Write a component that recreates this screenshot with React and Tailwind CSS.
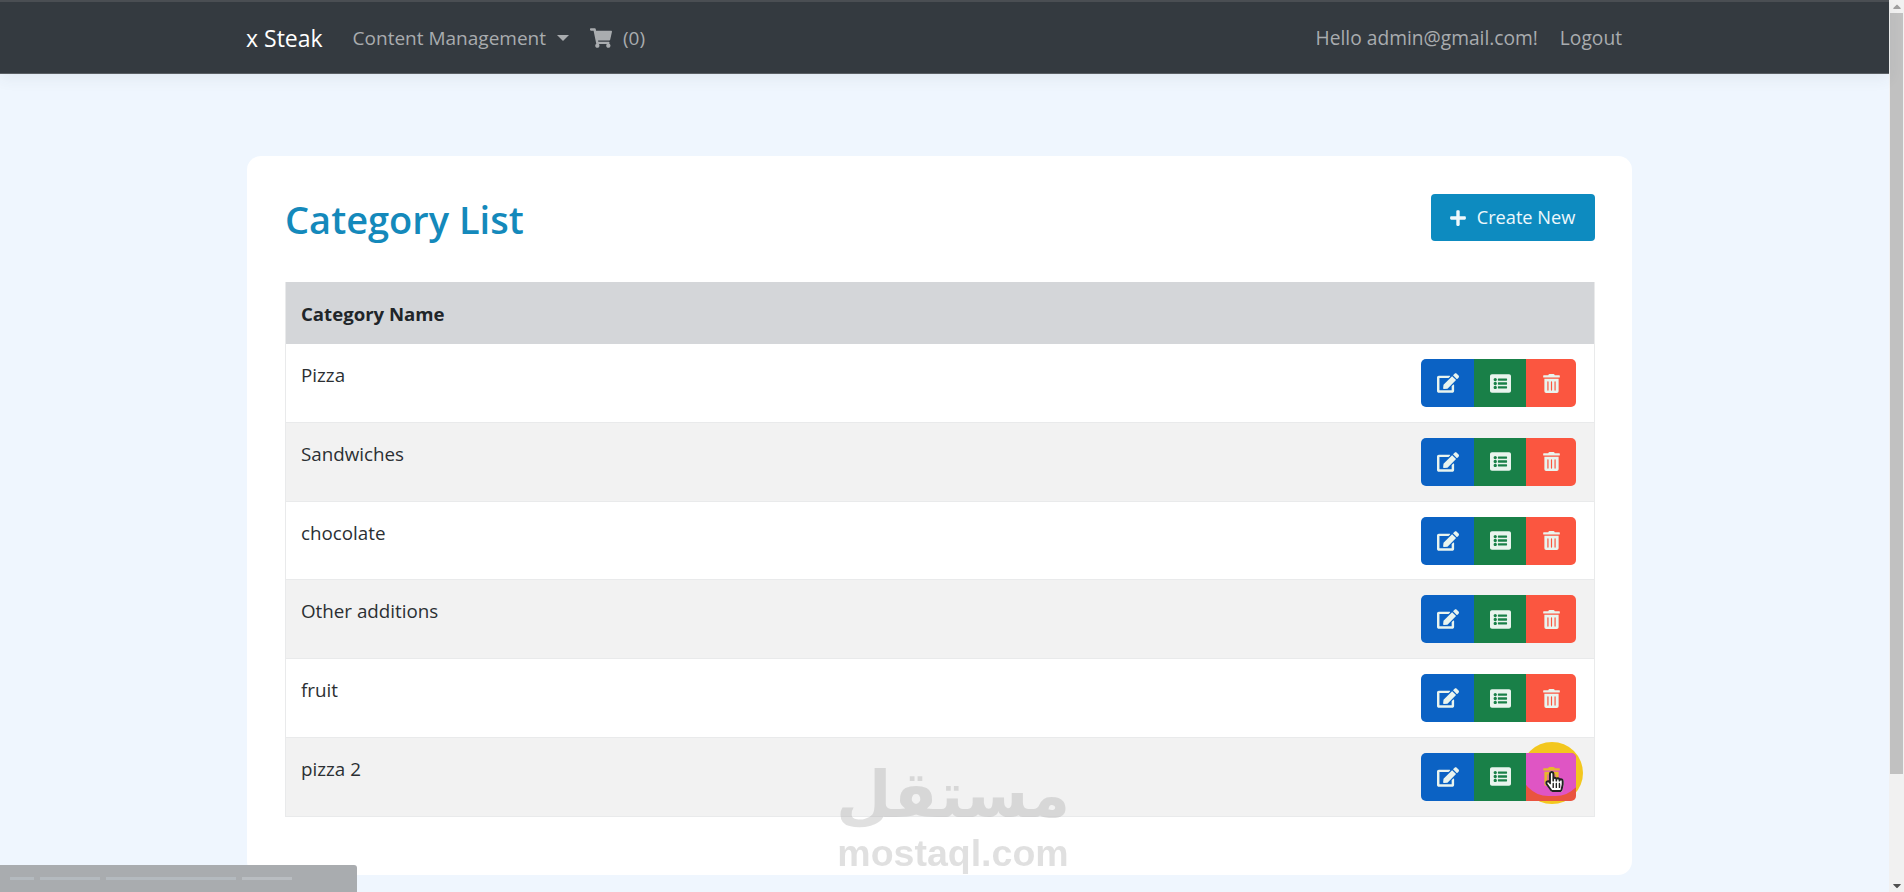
import React from 'react';
import { FaEdit, FaListAlt, FaTrashAlt, FaPlus, FaShoppingCart, FaHandPointer, FaRegHandPointer, FaCaretUp, FaCaretDown } from 'react-icons/fa';

const categories = ['Pizza', 'Sandwiches', 'chocolate', 'Other additions', 'fruit', 'pizza 2'];

const Navbar = () => (
    <nav className="relative h-[74px] shrink-0 bg-[#343a40] border-t-2 border-[#4a4e53] border-b border-b-[#5a5f64] shadow-[0_5px_14px_rgba(60,70,90,0.07)] flex items-center justify-between pl-[246px] pr-[267px]">
        <div className="flex items-center pt-[1px]">
            <span className="text-[23px] text-white mr-[30px]">x Steak</span>
            <span className="text-[19px] text-[#a9acaf]">Content Management</span>
            <span className="ml-[11px] w-0 h-0 border-x-[6px] border-x-transparent border-t-[6px] border-t-[#a9acaf]"></span>
            <FaShoppingCart className="ml-[21px] text-[#a9acaf] text-[22px]" />
            <span className="ml-[11px] text-[19px] text-[#a9acaf]">(0)</span>
        </div>
        <div className="flex items-center pt-[1px] text-[19.2px] text-[#a9acaf]">
            <span className="mr-[22px]">Hello admin@gmail.com!</span>
            <span>Logout</span>
        </div>
    </nav>
);

const ActionButtons = ({ hovered }) => (
    <div className="relative flex h-[48px] text-[#e9f4ee] text-[21px]">
        {hovered && <span className="absolute left-[100px] top-[-11px] w-[62px] h-[62px] rounded-full bg-[#f3c71e]"></span>}
        <button className="relative w-[53px] bg-[#0b62c4] rounded-l-[5px] flex items-center justify-center">
            <FaEdit className="text-[22px]" />
        </button>
        <button className="relative w-[52px] bg-[#198048] flex items-center justify-center">
            <FaListAlt />
        </button>
        <button className={`relative w-[50px] rounded-r-[5px] overflow-hidden flex items-center justify-center ${hovered ? 'bg-[#e9543f]' : 'bg-[#fb5640]'}`}>
            {hovered && <span className="absolute left-[-5px] top-[-11px] w-[62px] h-[54px] rounded-full bg-[#df55c4]"></span>}
            <FaTrashAlt className={`relative text-[19px] ${hovered ? 'text-[#e8b92a]' : ''}`} />
        </button>
        {hovered && (
            <span className="absolute left-[123px] top-[18px] text-[21px]">
                <FaHandPointer className="absolute text-white" />
                <FaRegHandPointer className="relative text-[#222]" />
            </span>
        )}
    </div>
);

const CategoryRow = ({ name, index, hovered }) => (
    <div className={`h-[78.8px] flex items-start justify-between pl-[15px] pr-[18px] border-b border-[#e9eaeb] ${index % 2 === 1 ? 'bg-[#f2f2f2]' : 'bg-white'}`}>
        <span className="mt-[17px] text-[18.8px] leading-[29px] text-[#2b2f33]">{name}</span>
        <div className="mt-[15px]">
            <ActionButtons hovered={hovered} />
        </div>
    </div>
);

const Scrollbar = () => (
    <div className="w-[15px] shrink-0 bg-[#f1f1f1] flex flex-col items-center text-[#505050]">
        <FaCaretUp className="h-[13px] text-[12px] text-[#a0a0a0]" />
        <div className="w-[13px] h-[761px] bg-[#c1c1c1]"></div>
        <div className="flex-1"></div>
        <FaCaretDown className="h-[13px] text-[12px]" />
    </div>
);

const Watermark = () => (
    <div className="absolute left-[838px] top-[757px] w-[230px] flex flex-col items-center text-[#a8a8a8] opacity-35 pointer-events-none">
        <span dir="rtl" className="text-[64px] h-[76px] leading-[76px] font-bold [font-family:'DejaVu_Sans',sans-serif]">مستقل</span>
        <span className="text-[37.5px] leading-[40px] font-bold [font-family:'Liberation_Sans',sans-serif]">mostaql.com</span>
    </div>
);

const App = () => {
    return (
        <div className="relative flex h-screen overflow-hidden bg-[#eff6fe] [font-family:'Open_Sans',sans-serif]">
            <div className="flex-1 flex flex-col min-w-0">
                <Navbar />
                <main className="pl-[247px] pr-[257px] pt-[82px]">
                    <div className="bg-white rounded-[14px] h-[719px] pl-[38px] pr-[37px] pt-[38px]">
                        <div className="flex items-center justify-between h-[46px] mb-[42px]">
                            <h1 className="mt-[4px] text-[38px] font-semibold text-[#1489bb] leading-none">Category List</h1>
                            <button className="h-[47px] w-[164px] bg-[#0d8bc0] rounded-[4px] text-[#eef8fc] text-[18.2px] flex items-center justify-center gap-[10px] pt-[1px] pr-[2px]">
                                <FaPlus className="text-[18px]" />
                                Create New
                            </button>
                        </div>
                        <div className="border-x border-[#e9eaeb]">
                            <div className="h-[62px] bg-[#d4d6d9] flex items-center pl-[15px] pt-[1px] text-[18.6px] font-bold text-[#212529]">
                                Category Name
                            </div>
                            {categories.map((name, i) => (
                                <CategoryRow key={name} name={name} index={i} hovered={i === categories.length - 1} />
                            ))}
                        </div>
                    </div>
                </main>
            </div>
            <Scrollbar />
            <Watermark />
            <div className="absolute left-0 bottom-0 w-[357px] h-[27px] bg-[#a9acaf] rounded-tr-[3px] flex items-center gap-[6px] pl-[10px] blur-[0.5px]">
                <span className="w-[24px] h-[3px] bg-[#b4babf]"></span>
                <span className="w-[60px] h-[3px] bg-[#b4babf]"></span>
                <span className="w-[130px] h-[3px] bg-[#b4babf]"></span>
                <span className="w-[50px] h-[3px] bg-[#b9bdc1]"></span>
            </div>
        </div>
    );
};

export default App;
